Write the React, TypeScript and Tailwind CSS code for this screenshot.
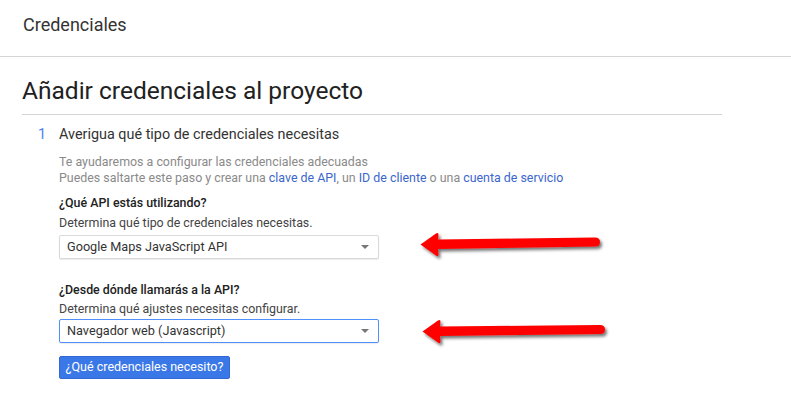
import React from "react";

function Arrow({ tilt = 2, len = 176, id }: { tilt?: number; len?: number; id: string }) {
  return (
    <svg width="200" height="34" viewBox="0 0 200 34" className="block shrink-0">
      <defs>
        <filter id={id} x="-10%" y="-40%" width="120%" height="180%">
          <feDropShadow dx="2" dy="2.5" stdDeviation="1.6" floodColor="#000" floodOpacity="0.55" />
        </filter>
      </defs>
      <g filter={`url(#${id})`}>
        <path
          d={`M1.5 14.5 L17 3.5 Q19.5 2 19.5 4.5 L19 ${9.5} L${len} ${9.5 - tilt} Q${len + 5} ${9.5 - tilt} ${len + 5} ${14 - tilt} Q${len + 5} ${18.5 - tilt} ${len} ${18.5 - tilt} L19 ${19} L19.5 24.5 Q19.5 27 17 25.5 Z`}
          fill="#ff0000"
        />
      </g>
    </svg>
  );
}

function Select({ value, focused }: { value: string; focused?: boolean }) {
  return (
    <div
      className={`flex h-[24px] w-[320px] shrink-0 items-center justify-between rounded-[2px] border bg-white pl-[7px] pr-[9px] text-[12.7px] text-[#333] shadow-[0_1px_1px_rgba(0,0,0,0.08)] ${
        focused ? "border-[#4d90fe]" : "border-[#d9d9d9]"
      }`}
    >
      <span className="leading-none">{value}</span>
      <span className="h-0 w-0 border-l-[4px] border-r-[4px] border-t-[4px] border-l-transparent border-r-transparent border-t-[#777]" />
    </div>
  );
}

export default function App() {
  return (
    <div className="min-h-[406px] w-[791px] bg-white font-['Roboto',_'Liberation_Sans',_sans-serif] text-[#212121]">
      <div className="h-[57px] border-b border-[#d5d5d5] pl-[23px] pt-[13px] text-[18px] leading-[24px] text-[#333]">
        Credenciales
      </div>
      <div className="pl-[22px] pr-[69px]">
        <h1 className="mt-[18px] border-b border-[#d5d5d5] pb-[7px] text-[24.5px] font-normal leading-[32px] text-[#212121]">
          Añadir credenciales al proyecto
        </h1>
        <div className="mt-[10px] flex">
          <div className="w-[37px] pl-[16px] text-[14.4px] leading-[20px] text-[#4285f4]">1</div>
          <div className="flex-1">
            <div className="text-[14.4px] leading-[20px] text-[#333]">Averigua qué tipo de credenciales necesitas</div>
            <div className="mt-[9px] text-[12.4px] leading-[16px] text-[#8a8a8a]">
              <div>Te ayudaremos a configurar las credenciales adecuadas</div>
              <div>
                Puedes saltarte este paso y crear una <span className="text-[#3b66cc]">clave de API</span>, un{" "}
                <span className="text-[#3b66cc]">ID de cliente</span> o una{" "}
                <span className="text-[#3b66cc]">cuenta de servicio</span>
              </div>
            </div>
            <div className="mt-[7px] text-[12.4px] font-medium leading-[20px] text-[#212121]">¿Qué API estás utilizando?</div>
            <div className="mt-[1px] text-[12.4px] leading-[18px] text-[#444]">Determina qué tipo de credenciales necesitas.</div>
            <div className="mt-[3px] flex h-[24px] items-center">
              <Select value="Google Maps JavaScript API" />
              <div className="ml-[40px]">
                <Arrow tilt={2} id="a1" />
              </div>
            </div>
            <div className="mt-[21px] text-[12.4px] font-medium leading-[20px] text-[#212121]">¿Desde dónde llamarás a la API?</div>
            <div className="text-[12.4px] leading-[18px] text-[#444]">Determina qué ajustes necesitas configurar.</div>
            <div className="mt-[1px] flex h-[24px] items-center">
              <Select value="Navegador web (Javascript)" focused />
              <div className="ml-[42px] mt-[6px]">
                <Arrow tilt={1.5} len={179} id="a2" />
              </div>
            </div>
            <button className="mt-[13px] flex h-[23px] w-[171px] items-center justify-center rounded-[2px] border border-[#3367d6] bg-[#3b78e7] text-[12.5px] leading-none text-white">
              ¿Qué credenciales necesito?
            </button>
          </div>
        </div>
      </div>
    </div>
  );
}
